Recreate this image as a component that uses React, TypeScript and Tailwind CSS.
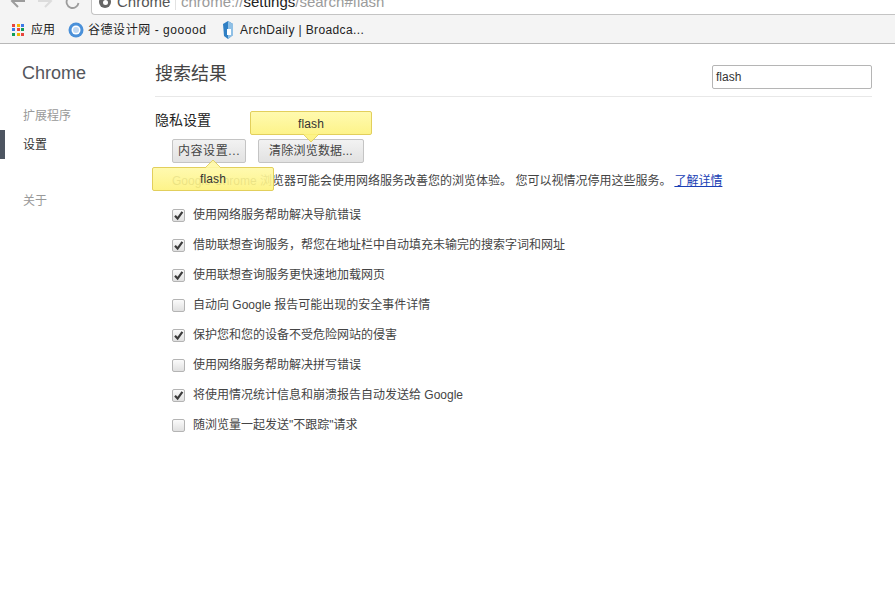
const sans = '"Liberation Sans", "Noto Sans CJK SC", sans-serif';

const rows: [boolean, string][] = [
  [true, "使用网络服务帮助解决导航错误"],
  [true, "借助联想查询服务，帮您在地址栏中自动填充未输完的搜索字词和网址"],
  [true, "使用联想查询服务更快速地加载网页"],
  [false, "自动向 Google 报告可能出现的安全事件详情"],
  [true, "保护您和您的设备不受危险网站的侵害"],
  [false, "使用网络服务帮助解决拼写错误"],
  [true, "将使用情况统计信息和崩溃报告自动发送给 Google"],
  [false, "随浏览量一起发送\"不跟踪\"请求"],
];

function Check({ on }: { on: boolean }) {
  return (
    <span className="relative block w-[13px] h-[13px] shrink-0 rounded-[2px] border border-[#b4b4b4] bg-gradient-to-b from-[#fbfbfb] to-[#e0e0e0]">
      {on && (
        <svg viewBox="0 0 13 13" className="absolute left-[-1px] top-[-1px] w-[13px] h-[13px]">
          <path d="M3 6.8 L5.6 9.6 L10.4 2.8" fill="none" stroke="#3c3c3c" strokeWidth="2.2" />
        </svg>
      )}
    </span>
  );
}

function Bubble({ className, down }: { className: string; down: boolean }) {
  return (
    <div className={`absolute w-[122px] h-[24px] z-10 ${className}`}>
      <div className="w-full h-full flex items-center justify-center rounded-[2px] border border-[#e2cf5c] bg-gradient-to-b from-[#fff9a6]/90 to-[#fdf27c]/90 text-[12px] text-[#333]">
        <span className={down ? "mt-[1px] tracking-[0.1px]" : "tracking-[0.1px]"}>flash</span>
      </div>
      {down ? (
        <svg width="18" height="9" viewBox="0 0 18 9" className="absolute left-[52px] top-[23px] opacity-90">
          <path d="M1 0 L9 8 L17 0 Z" fill="#fdf27c" />
          <path d="M1 0 L9 8 L17 0" fill="none" stroke="#e2cf5c" />
          <path d="M2 0 H16" stroke="#fdf27c" strokeWidth="1.6" />
        </svg>
      ) : (
        <svg width="18" height="9" viewBox="0 0 18 9" className="absolute left-[52px] top-[-8px] opacity-90">
          <path d="M1 9 L9 1 L17 9 Z" fill="#fff9a6" />
          <path d="M1 9 L9 1 L17 9" fill="none" stroke="#e2cf5c" />
          <path d="M2 9 H16" stroke="#fff9a6" strokeWidth="1.6" />
        </svg>
      )}
    </div>
  );
}

function Dots() {
  const c = ["#e8453c", "#f4b400", "#3b78e7", "#3b78e7", "#e8453c", "#0f9d58", "#0f9d58", "#f4b400", "#e8453c"];
  return (
    <span className="grid grid-cols-3 gap-[1px] w-[13px] h-[13px]">
      {c.map((x, i) => (
        <span key={i} style={{ background: x }} className="block w-[3px] h-[3px]" />
      ))}
    </span>
  );
}

export default function App() {
  return (
    <div className="relative w-[895px] h-[591px] overflow-hidden bg-white" style={{ fontFamily: sans }}>
      <div className="h-[44px] bg-[#f4f4f4] border-b border-[#b8b8b8] overflow-hidden">
        <div className="h-[15px] flex items-end relative">
          <div className="flex items-center gap-[11px] pl-[10px] w-[91px] h-[15px] text-[#9a9a9a]">
            <svg width="16" height="22" viewBox="0 0 16 22" className="mt-[-8px] shrink-0">
              <path d="M15 8H3M8 2L2 8l6 6" fill="none" stroke="#9c9c9c" strokeWidth="2" />
            </svg>
            <svg width="16" height="22" viewBox="0 0 16 22" className="mt-[-8px] shrink-0">
              <path d="M1 8h12M8 2l6 6-6 6" fill="none" stroke="#dcdcdc" strokeWidth="2" />
            </svg>
          </div>
          <svg width="16" height="22" viewBox="0 0 16 22" className="absolute left-[65px] top-[-6px]">
            <path d="M13.5 9a6 6 0 1 1-1.6-5.2" fill="none" stroke="#9c9c9c" strokeWidth="1.8" />
            <path d="M14 0v6H8z" fill="#9c9c9c" />
          </svg>
          <div className="flex-1 h-[15px] bg-white border border-t-0 border-r-0 border-[#c4c4c4] rounded-bl-[4px] flex items-end">
            <div className="flex items-center h-[20px] mb-[2px] pl-[7px] text-[15px] leading-[20px] text-[#555] whitespace-nowrap">
              <span className="w-[12px] h-[12px] rounded-full bg-[#666] mr-[6px] flex items-center justify-center">
                <span className="w-[5px] h-[5px] rounded-full bg-white" />
              </span>
              <span className="w-[58px]">Chrome</span>
              <span className="w-[1px] h-[16px] bg-[#e2e2e2] mr-[5px]" />
              <span className="text-[#9b9b9b]">chrome://</span>
              <span className="text-[#222]">settings</span>
              <span className="text-[#9b9b9b]">/search#flash</span>
            </div>
          </div>
        </div>
        <div className="h-[28px] flex items-center pt-[2px] pl-[12px] text-[12px] text-[#222] whitespace-nowrap">
          <Dots />
          <span className="ml-[6px] w-[37px]">应用</span>
          <svg width="16" height="16" viewBox="0 0 16 16" className="mr-[4px] shrink-0">
            <circle cx="8" cy="8" r="7.5" fill="#4a90d9" />
            <circle cx="8" cy="8" r="4.5" fill="#fff" />
            <circle cx="8" cy="8" r="3" fill="#4a90d9" opacity="0.35" />
          </svg>
          <span className="w-[131px] tracking-[0.55px]">谷德设计网 - gooood</span>
          <svg width="12" height="18" viewBox="0 0 12 18" className="ml-[3px] mr-[6px] shrink-0">
            <path d="M1 3l5-3 5 3v11l-5 4-4-3z" fill="#2f7fc4" />
            <path d="M6 0l5 3v11l-5 4z" fill="#8fc0e6" />
            <path d="M5 8h4v6H5z" fill="#fff" />
          </svg>
          <span className="tracking-[0.38px]">ArchDaily | Broadca...</span>
        </div>
      </div>

      <div className="flex">
        <aside className="w-[155px] shrink-0">
          <div className="pl-[22px] pt-[19px] text-[18px] leading-[21px] text-[#54565c]">Chrome</div>
          <nav className="mt-[17px] text-[12px]">
            <div className="pl-[23px] h-[29px] leading-[31px] text-[#999]">扩展程序</div>
            <div className="pl-[18px] h-[29px] leading-[31px] text-[#333] border-l-[5px] border-[#4d5561]">设置</div>
            <div className="pl-[23px] h-[29px] leading-[31px] text-[#999] mt-[27px]">关于</div>
          </nav>
        </aside>

        <main className="w-[717px] relative">
          <div className="h-[53px] border-b border-[#e8e8e8] flex justify-between items-start pt-[21px]">
            <h1 className="text-[18px] leading-[18px] text-[#444]">搜索结果</h1>
            <div className="w-[160px] h-[24px] border border-[#b5b5b5] rounded-[2px] bg-white text-[12px] leading-[22px] pl-[3px] text-[#333]">
              flash
            </div>
          </div>
          <h2 className="mt-[15px] text-[14px] leading-[16px] text-[#222]">隐私设置</h2>
          <div className="mt-[11px] ml-[17px] flex gap-[12px]">
            <button className="w-[74px] h-[24px] rounded-[2px] border border-[#c4c4c4] bg-gradient-to-b from-[#f2f2f2] to-[#e2e2e2] text-[12px] tracking-[0.6px] text-[#444]">内容设置...</button>
            <button className="w-[106px] h-[24px] rounded-[2px] border border-[#c4c4c4] bg-gradient-to-b from-[#f2f2f2] to-[#e2e2e2] text-[12px] tracking-[0.2px] text-[#444]">清除浏览数据...</button>
          </div>
          <p className="mt-[10px] ml-[17px] text-[12px] leading-[16px] text-[#444] whitespace-nowrap">
            Google Chrome 浏览器可能会使用网络服务改善您的浏览体验。 您可以视情况停用这些服务。
            <a className="ml-[3px] text-[#1a3fb5] underline">了解详情</a>
          </p>
          <ul className="mt-[17px] ml-[17px] flex flex-col gap-[12px]">
            {rows.map(([on, t]) => (
              <li key={t} className="flex items-center h-[18px] gap-[8px] text-[12px] text-[#444] whitespace-nowrap">
                <Check on={on} />
                <span>{t}</span>
              </li>
            ))}
          </ul>
          <Bubble className="left-[95px] top-[67px]" down />
          <Bubble className="left-[-3px] top-[123px]" down={false} />
        </main>
      </div>
    </div>
  );
}
